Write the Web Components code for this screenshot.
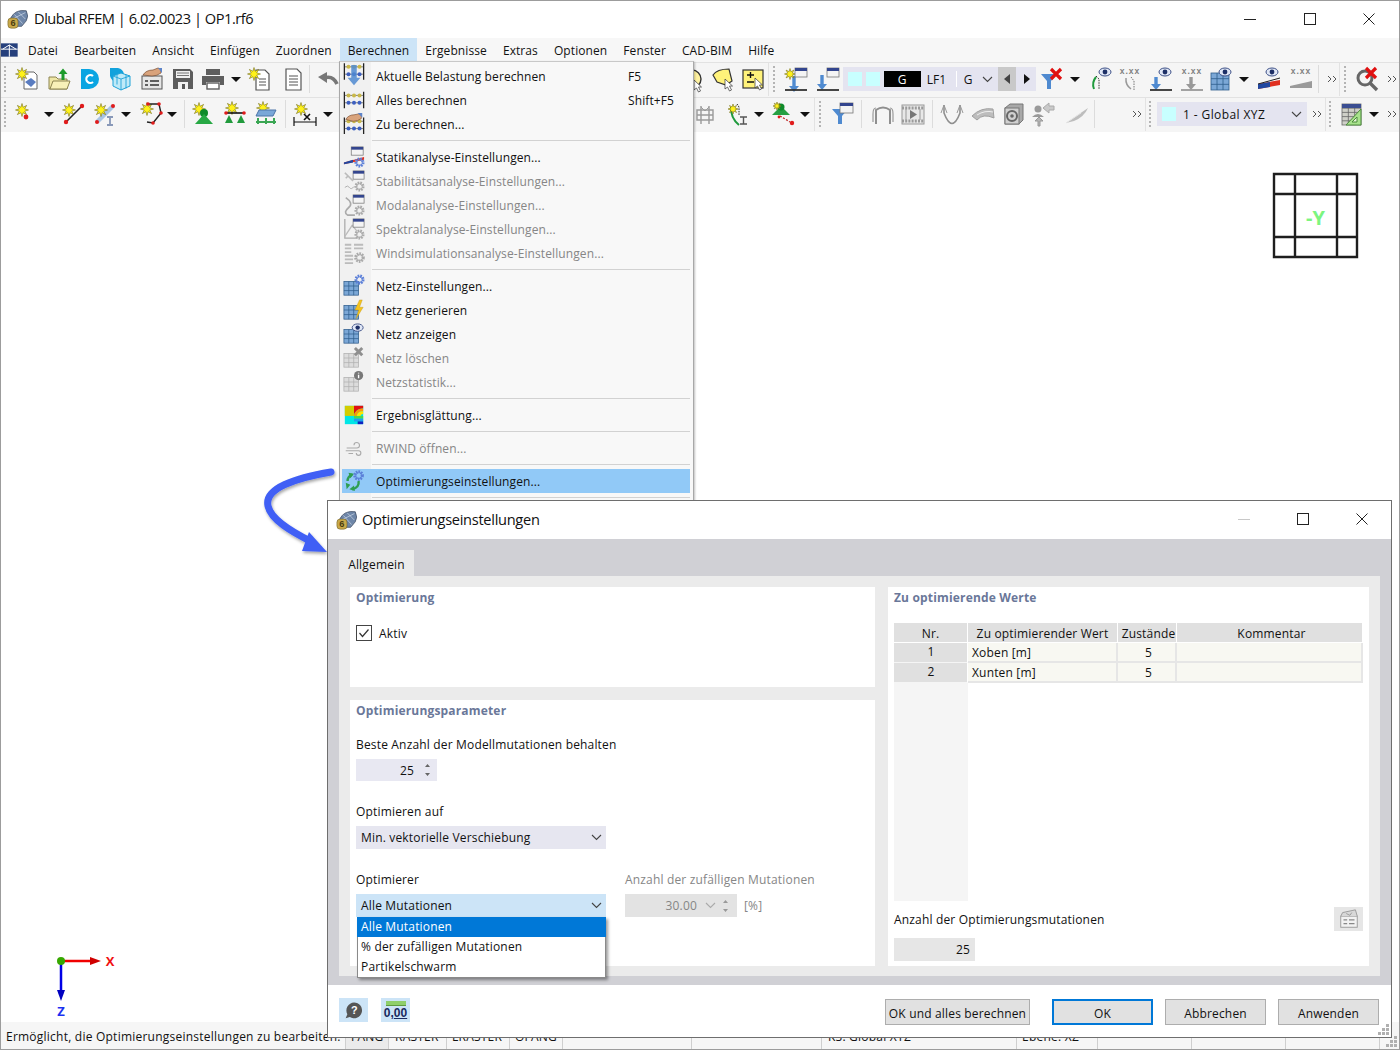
<!DOCTYPE html>
<html lang="de">
<head>
<meta charset="utf-8">
<title>Dlubal RFEM</title>
<style>
  html, body { margin: 0; padding: 0; background: #fff; }
  body { font: 12px "Open Sans", "Liberation Sans", sans-serif; color: #111; }
</style>
</head>
<body>
<rfem-app></rfem-app>
<script>
// ---- icon helpers, everything is drawn on a 24x24 box
const star = (x, y, r = 6.5) => {
  let p = [];
  for (let i = 0; i < 16; i++) {
    const a = Math.PI * i / 8, q = i % 2 ? r * .45 : r;
    p.push((x + q * Math.sin(a)).toFixed(1) + ',' + (y - q * Math.cos(a)).toFixed(1));
  }
  return `<polygon points="${p.join(' ')}" fill="#fff21a" stroke="#77701a" stroke-width=".6"/>`;
};
const dot = (x, y, r = 1.8, c = '#e01b1b') => `<circle cx="${x}" cy="${y}" r="${r}" fill="${c}"/>`;
const gear = (x, y, r = 3.5, c = '#5b7fd8') => `<circle cx="${x}" cy="${y}" r="${r}" fill="none" stroke="${c}" stroke-width="${r * .9}" stroke-dasharray="1.6 1"/><circle cx="${x}" cy="${y}" r="${r * .9}" fill="none" stroke="${c}" stroke-width=".9"/>`;
const grid = (x, y, w, h, n, m, f = '#7ba7d6', s = '#2f5d8c') => {
  let l = '';
  for (let i = 1; i < n; i++) l += `M${x + w * i / n} ${y}v${h}`;
  for (let i = 1; i < m; i++) l += `M${x} ${y + h * i / m}h${w}`;
  return `<rect x="${x}" y="${y}" width="${w}" height="${h}" fill="${f}" stroke="${s}" stroke-width=".8"/><path d="${l}" stroke="${s}" stroke-width=".8"/>`;
};
const eye = (x, y) => `<ellipse cx="${x}" cy="${y}" rx="6" ry="4" fill="#dfe6f5" stroke="#3c4f86"/><circle cx="${x}" cy="${y}" r="2.4" fill="#1d2f66"/>`;
const win = (x, y, w = 12, h = 9) => `<rect x="${x}" y="${y}" width="${w}" height="${h}" fill="#f4f4f4" stroke="#777" stroke-width=".8"/><rect x="${x}" y="${y}" width="${w}" height="3" fill="#33458e"/>`;
const arrowDown = (x, y, l, c = '#4f8ad0') => `<path d="M${x} ${y}v${l}" stroke="${c}" stroke-width="3.4"/><path d="M${x - 5} ${y + l}h10l-5 6z" fill="${c}"/>`;
const xMark = (x, y, r = 5, c = '#e01010') => `<path d="M${x - r} ${y - r}L${x + r} ${y + r}M${x + r} ${y - r}L${x - r} ${y + r}" stroke="${c}" stroke-width="3.2"/>`;
const xxx = (c = '#808080') => `<text x="12" y="7" text-anchor="middle" font-family="Liberation Sans, sans-serif" font-size="8.5" font-weight="700" letter-spacing="1" fill="${c}">x.xx</text>`;
const abacus = (y, h = 18) => {
  let s = `<path d="M1.5 ${y}v${h}M22.5 ${y}v${h}" stroke="#222" stroke-width="1.4"/>`;
  [y + 4, y + 12].forEach((q, i) => {
    s += `<path d="M2 ${q}h20" stroke="#555" stroke-width=".8"/>`;
    [6, 12, 18].forEach(x => s += dot(x, q, 2.2, i ? '#3c5fc0' : '#c9b84a'));
  });
  return s;
};
const filter = (c = '#4f8ad0') => `<path d="M1 7h16l-6 7v8h-4v-8z" fill="${c}"/>`;
const cursor = (x, y) => `<path d="M${x} ${y}l0 10 2.5-2 2 4 2-1-2-4h3z" fill="#fff" stroke="#333" stroke-width=".7"/>`;
const gr = '#9a9a9a';

const ICONS = {
  flag: `<rect x="0" y="4" width="20" height="16" fill="#26407c"/><path d="M0 11h20M10 6L2 11M10 6l8 5M10 6v14" stroke="#fff" stroke-width="1.2"/>`,
  app: `<path d="M4 11Q9 1 21 3q3 6 0 11l-5 6H7z" fill="#6e86a8" stroke="#3d4a60" stroke-width=".8"/><path d="M8 7l9 10M12 4l8 8M6 12l14-7" stroke="#c7d3e3" stroke-width=".8"/><rect x="1" y="11" width="11" height="11" rx="3.5" fill="#c9a94a" stroke="#6b5a20" stroke-width=".6"/><text x="6.500" y="20" text-anchor="middle" font-size="10" font-weight="700" font-family="Liberation Sans, sans-serif" fill="#4b3d10">6</text>`,
  new: `<path d="M9 5h10l3 3v14H9z" fill="#fff" stroke="#666"/><path d="M10 15l6-4 5 4-5 5z" fill="#5a7cc0"/>${star(7, 7)}`,
  open: `<path d="M2 10h7l2 2h9v10H2z" fill="#efe7a6" stroke="#8c8450"/><path d="M3 22l3-8h17l-3 8z" fill="#f8f1b8" stroke="#8c8450"/><path d="M16 13V7" stroke="#1d9a2b" stroke-width="3"/><path d="M11.5 7L16 1.5 20.500 7z" fill="#1d9a2b"/>`,
  dlubal: `<path d="M4 2h8a10 10 0 0 1 0 20H4z" fill="#0aa5e2"/><path d="M16 9a4 4 0 1 0 0 6" fill="none" stroke="#fff" stroke-width="2.2"/>`,
  cube: `<path d="M1 1h8a8 8 0 0 1 6 6H8v8A8 8 0 0 1 1 9z" fill="#12a2dc"/><path d="M12 6l9 3v10l-9 4-8-4V9z" fill="#bfeaf8" stroke="#1fa3d8"/><path d="M12 12l9-3M12 12v11M12 12L4 9M8 7.500v10M17 7.500v14" stroke="#1fa3d8" stroke-width=".9"/>`,
  hand: `<rect x="2" y="9" width="20" height="13" fill="#e6e6e6" stroke="#555"/><path d="M5 14h3M10 14h9M5 18h3M10 18h9" stroke="#333" stroke-width="1.4"/><path d="M3 8Q6 3 13 3l5-2 3 1v4q-4 3-9 3z" fill="#d9a37c" stroke="#7a4d30" stroke-width=".7"/><path d="M18 1l4 0v5z" fill="#5d84c9"/>`,
  save: `<path d="M2 2h17l3 3v17H2z" fill="#5d5d5d"/><rect x="5" y="4" width="14" height="7" fill="#f0f0f0"/><path d="M6 6h12M6 8.500h12" stroke="#777"/><rect x="7" y="15" width="10" height="7" fill="#f0f0f0"/><rect x="11" y="17" width="3" height="5" fill="#555"/>`,
  print: `<rect x="5" y="2" width="14" height="6" fill="#5f5f5f"/><path d="M1 9h22v9h-4v-3H5v3H1z" fill="#5f5f5f"/><rect x="6" y="16" width="12" height="6" fill="#fff" stroke="#5f5f5f" stroke-width="1.4"/>`,
  doc: `<path d="M5 2h11l4 4v17H5z" fill="#fff" stroke="#555" stroke-width="1.2"/><path d="M8 9h9M8 12h9M8 15h9M8 18h9" stroke="#555" stroke-width="1.2"/>`,
  stardoc: `<path d="M8 3h9l4 4v16H8z" fill="#fff" stroke="#555" stroke-width="1.2"/><path d="M11 12h7M11 15h7M11 18h7" stroke="#555" stroke-width="1.2"/>${star(6, 7, 6.5)}`,
  undo: `<path d="M21 17Q17 8 8 11" fill="none" stroke="#777" stroke-width="3.6"/><path d="M2 10l9-5v11z" fill="#777"/>`,
  stardot: `${star(11, 8)}${dot(15, 15, 2.4)}`,
  starline: `${star(8, 8)}<path d="M5 20L21 4" stroke="#222" stroke-width="1.6"/>${dot(5, 20, 2.2)}${dot(21, 4, 2.2)}`,
  starbeam: `<path d="M4 20L20 4" stroke="#a8c4e4" stroke-width="4.500"/>${star(8, 8)}${dot(4, 20, 2)}${dot(20, 4, 2)}<path d="M14 15h6M14 23h6M17 15v8" stroke="#8898b8" stroke-width="1.8"/>`,
  starpoly: `${star(7, 7)}<path d="M8 2h11l2 9-8 10-6-1" fill="none" stroke="#222" stroke-width="1.4"/>${dot(8, 2)}${dot(19, 2)}${dot(21, 11)}${dot(13, 21)}`,
  node: `${star(8, 7)}<circle cx="13" cy="11" r="4" fill="#0e8a2a"/><path d="M13 12l9 10H4z" fill="#27a844"/>`,
  supports: `${star(9, 6)}<path d="M2 11h20" stroke="#111" stroke-width="1.6"/>${dot(3, 11)}${dot(21, 11)}<path d="M6 13l-4 8h8zM18 13l-4 8h8z" fill="#219a3c"/>`,
  surface: `${star(9, 6)}<path d="M5 8h17l-3 6H2z" fill="#7aa7d8" stroke="#4c74a8"/><path d="M4 16v6M12 16v6M20 16v6M2 20h20" stroke="#3aa653" stroke-width="2"/>`,
  starx: `${star(8, 7)}<path d="M1 15v9M23 15v9M1 20h22" stroke="#111" stroke-width="1.2"/><path d="M11 12l6 6M17 12l-6 6" stroke="#111" stroke-width="1.6"/>`,
  yelcirc: `<circle cx="12" cy="12" r="9" fill="#fff2a0" stroke="#333" stroke-width="1.4"/>${cursor(14, 13)}`,
  yelshape: `<path d="M2 8Q6 2 18 2l3 12-6 4-9-3z" fill="#fff27a" stroke="#333" stroke-width="1.2"/>${cursor(14, 12)}`,
  yelbox: `<rect x="2" y="3" width="20" height="18" fill="#fff27a" stroke="#333" stroke-width="1.2"/><path d="M6 8h7M9.500 5v6M6 15h7" stroke="#111" stroke-width="1.4"/>${cursor(14, 11)}`,
  starload: `${arrowDown(10, 9, 10)}<path d="M1 23h22" stroke="#333" stroke-width="1.8"/>${star(6, 7, 5.5)}${win(11, 1)}`,
  load: `${arrowDown(6, 8, 9)}<path d="M1 23h22" stroke="#333" stroke-width="1.8"/>${win(11, 1)}`,
  filterx: `${filter()}${xMark(16, 7, 5)}`,
  filterwin: `${filter()}${win(9, 1, 13, 10)}`,
  eyebeam: `<path d="M6 22a12 12 0 0 1 2-12" fill="none" stroke="#1f9a3c" stroke-width="2"/><path d="M8 9l3 3v10" fill="none" stroke="#333" stroke-dasharray="1.5 1"/>${eye(17, 5)}`,
  xxxbeam: `${xxx()}<path d="M8 11a12 12 0 0 0 5 11" fill="none" stroke="#999" stroke-width="1.500"/><path d="M13 10l3 4v9" fill="none" stroke="#777" stroke-dasharray="1.5 1"/>`,
  eyeload: `${arrowDown(7, 10, 7)}<path d="M1 23h22" stroke="#333" stroke-width="1.8"/>${eye(16, 5)}`,
  xxxload: `${xxx()}${arrowDown(11, 10, 7, '#999')}<path d="M1 23h22" stroke="#999" stroke-width="1.8"/>`,
  grideye: `${grid(2, 6, 18, 17, 3, 3)}${eye(16, 5)}`,
  eyeslope: `<path d="M1 17L23 13v5L1 22z" fill="#e03020"/><path d="M1 17l12-2v5L1 22z" fill="#2148a0"/><path d="M1 17L23 11" stroke="#222"/>${eye(15, 5)}`,
  xxxslope: `${xxx()}<path d="M1 19l22-5v7H1z" fill="#9a9a9a"/>`,
  magx: `<circle cx="10" cy="11" r="7" fill="none" stroke="#666" stroke-width="3"/><path d="M15 16l7 7" stroke="#666" stroke-width="3.4"/>${xMark(16, 6, 5)}`,
  graymodel: `<path d="M4 8h16v10H4zM8 4v18M16 4v18M4 13h16" fill="none" stroke="${gr}" stroke-width="1.4"/><path d="M8 5l4 4 4-4" fill="none" stroke="${gr}"/>`,
  beamstar: `<path d="M6 5a22 22 0 0 0 8 18" fill="none" stroke="#1f9a3c" stroke-width="2"/><path d="M12 2l2 3v8" fill="none" stroke="#222" stroke-dasharray="1.5 1"/>${star(8, 7, 5)}<path d="M15 15h7M15 22h7M18.500 15v7" stroke="#555" stroke-width="1.4"/>`,
  nodered: `<path d="M11 4l9 9H2z" fill="#26a043"/><circle cx="11" cy="5" r="3.500" fill="#0e8a2a"/>${star(7, 4, 4)}<path d="M10 14l10 6" stroke="#c02020" stroke-dasharray="2 1.500" stroke-width="1.2"/>${dot(22, 21, 2.2)}${dot(9, 15, 1.4)}`,
  arch: `<path d="M5 22V8Q12 3 19 8v14" fill="none" stroke="#8f8f8f" stroke-width="2"/><path d="M2 12Q2 6 5 6M22 12q0-6-3-6M2 12v8M22 12v8" fill="none" stroke="${gr}" stroke-width="1.2"/>`,
  film: `<rect x="1" y="3" width="22" height="19" fill="#e8e8e8" stroke="${gr}"/><path d="M1 6h22M1 19h22" stroke="${gr}" stroke-dasharray="2 1.2" stroke-width="3"/><path d="M5 7v11M19 7v11" stroke="${gr}"/><path d="M9 8l7 4.500L9 17z" fill="#777"/>`,
  curve: `<path d="M4 3v8Q12 32 20 11V3" fill="none" stroke="#8f8f8f" stroke-width="1.6"/><path d="M1 11l3-8 3 8M17 11l3-8 3 8" fill="none" stroke="${gr}"/>`,
  sheet: `<path d="M1 14Q10 5 22 7l1 9Q12 11 6 18z" fill="#bdbdbd" stroke="#a0a0a0"/><path d="M6 13Q14 8 22 10" stroke="#eee" fill="none"/>`,
  box: `<path d="M3 6l5-4h13v16l-4 4H3z" fill="#a8a8a8" stroke="#777"/><rect x="3" y="6" width="14" height="16" fill="#d0d0d0" stroke="#777"/><circle cx="10" cy="14" r="5" fill="none" stroke="#666" stroke-width="2"/><circle cx="10" cy="14" r="1.800" fill="#666"/>`,
  person: `<circle cx="6" cy="7" r="3.500" fill="${gr}"/><path d="M0 15q6-6 12 0z" fill="${gr}"/><path d="M22 4h-5V1l-6 5 6 5V8h5z" fill="#c9c9c9" stroke="#aaa"/><path d="M6 24v-5H3l4-4 4 4H8v5z" fill="#b5b5b5" stroke="#999"/>`,
  slash: `<path d="M1 21L23 6q-4 9-14 13z" fill="#bdbdbd"/><path d="M1 21L16 11" stroke="#e6e6e6"/>`,
  table: `${grid(2, 2, 19, 21, 3, 5, '#cfd0c8', '#666')}<rect x="2" y="2" width="19" height="4" fill="#3b4e92"/><path d="M21 7v16H6z" fill="#a8e28c" stroke="#4b8a3a"/><path d="M12 20h5v-5z" fill="#e6f6d8" stroke="#4b8a3a"/>`,
  // menu icons
  calc1: `<g transform="translate(0 -2)">${abacus(0)}</g><path d="M9 0h6v14h4l-7 8-7-8h4z" fill="#4f8ad0" opacity=".85"/>`,
  calc2: abacus(3),
  calc3: `${abacus(5)}<path d="M3 7Q6 2 12 2l5-1 3 1v4q-4 3-9 3z" fill="#d9a37c" stroke="#7a4d30" stroke-width=".7"/><path d="M16 0h5v5z" fill="#5d84c9"/>`,
  statik: `<path d="M1 18L23 12v3L1 20z" fill="#e03020"/><path d="M1 18l10-3v3L1 20z" fill="#2148a0"/>${win(9, 1, 13, 9)}${gear(18, 18, 3.8)}`,
  stabil: `<path d="M2 3l9 9M6 6l-3 3" stroke="#bbb" stroke-width="1.800"/>${win(11, 1, 12, 9)}<path d="M2 19q3-3 5 0t5-1" fill="none" stroke="#aaa"/>${gear(18, 18, 3.8, '#aaa')}`,
  modal: `${win(11, 1, 12, 9)}<path d="M3 4q9 6 3 11T5 23h8" fill="none" stroke="#aaa" stroke-width="1.800"/>${gear(18, 18, 3.8, '#aaa')}`,
  spektral: `<path d="M2 1v21h14" fill="none" stroke="#aaa" stroke-width="1.4"/><path d="M2 20L10 8l5 6" fill="none" stroke="#bbb" stroke-width="1.4"/>${win(11, 1, 12, 9)}${gear(18, 18, 3.8, '#aaa')}`,
  winds: `<path d="M2 3h7M2 7h7M2 11h7M2 15h9M2 19h9M2 23h9M12 3h10M12 7h10" stroke="#bbb" stroke-width="2"/>${gear(18, 17, 4, '#aaa')}`,
  meshgear: `${grid(1, 7, 16, 15, 3, 3)}${gear(18, 5, 3.8)}`,
  meshbolt: `${grid(1, 7, 16, 15, 3, 3)}<path d="M18 1l-5 11h4l-3 10 8-13h-4l3-8z" fill="#f6c41e" stroke="#b8901a" stroke-width=".4"/>`,
  mesheye: `${grid(1, 7, 16, 15, 3, 3)}${eye(16, 5)}`,
  meshx: `${grid(1, 7, 16, 15, 3, 3, '#dcdcdc', '#b0b0b0')}${xMark(17, 5, 4, '#8f8f8f')}`,
  meshinfo: `${grid(1, 7, 16, 15, 3, 3, '#dcdcdc', '#b0b0b0')}<circle cx="17" cy="5" r="5" fill="#777"/><path d="M17 4v4M17 1.800v1" stroke="#fff" stroke-width="1.500"/>`,
  rainbow: `<rect x="2" y="2" width="20" height="20" fill="#00e6e6"/><rect x="2" y="2" width="10" height="11" fill="#d4cc00"/><path d="M12 2h10v3a9 9 0 0 0-10 8z" fill="#e01010"/><path d="M12 13a9 9 0 0 1 10-8v3a6 6 0 0 0-7 5z" fill="#ff9a00"/><path d="M15 13a6 6 0 0 1 7-5v3a3 3 0 0 0-3 2z" fill="#ffe600"/><path d="M12 13h10v3H12z" fill="#4dd84d"/><path d="M12 16h10v3H12z" fill="#20a0f0"/><path d="M16 19h6v3h-6z" fill="#1020c0"/>`,
  rwind: `<path d="M4 12h11a3 3 0 1 0-3-3M3 15h14a2.500 2.500 0 1 1-2.500 2.500M6 18h5" fill="none" stroke="#aaa" stroke-width="1.200"/>`,
  opt: `<path d="M5 12q0-5 5-7" fill="none" stroke="#2f9e50" stroke-width="2.600"/><path d="M6 3l6 1-4 5zM4 21l-1-7 5 2z" fill="#2f9e50"/><path d="M17 12q1 7-7 9" fill="none" stroke="#2f9e50" stroke-width="2.600"/><path d="M12 17l1 6-6-2z" fill="#2f9e50"/>${gear(17, 6, 4)}`,
  helpbub: `<path d="M12 3a9.500 9.500 0 1 1-5 17.500L2 22l2-5A9.500 9.500 0 0 1 12 3z" fill="#555"/><text x="12.500" y="17" text-anchor="middle" font-size="13" font-weight="700" font-family="Liberation Sans, sans-serif" fill="#fff">?</text>`,
  board: `<rect x="3" y="9" width="18" height="12" fill="#f2f2f2" stroke="#999"/><path d="M6 13h4M12 13h6M6 17h4M12 17h6" stroke="#888" stroke-width="1.400"/><path d="M3 9l2-4 14-3 2 7" fill="#d8d8d8" stroke="#999"/><path d="M9 6l4 2 2-3" fill="none" stroke="#999"/>`
};
const svg = (name, size = 24) => `<svg xmlns="http://www.w3.org/2000/svg" width="${size}" height="${size}" viewBox="0 0 24 24" style="display:block;overflow:visible">${ICONS[name] || ''}</svg>`;
const chevron = (c = '#444') => `<svg width="11" height="7" viewBox="0 0 11 7" style="display:block"><path d="M1 1l4.500 4.500L10 1" fill="none" stroke="${c}" stroke-width="1.100"/></svg>`;

class BaseEl extends HTMLElement {
  constructor() {
    super();
    this.shadowDOM = this.attachShadow({mode: "open"});
  }
  connectedCallback() {
    this.render();
  }
}

// ---- window chrome
class TitleBar extends BaseEl {
  render() {
    const small = this.hasAttribute('small');
    const w = small ? 59 : 59.5;
    this.shadowDOM.innerHTML = `
    <style>
      :host { display: flex; align-items: center; height: ${small ? 38 : 37}px; background: #fff; flex: none; }
      .ico { margin-left: ${small ? 8 : 6}px; width: 22px; padding-bottom: 1px; }
      .t { margin-left: ${small ? 4 : 5}px; font-size: 14.6px; color: #111; letter-spacing: ${small ? -.29 : -.46}px; white-space: nowrap; padding-bottom: 3px; }
      .ctl { margin-left: auto; display: flex; padding-bottom: 2px; }
      .b { width: ${w}px; height: 26px; display: flex; align-items: center; justify-content: center; }
    </style>
    <div class="ico">${svg('app', 22)}</div>
    <div class="t"><slot></slot></div>
    <div class="ctl">
      <div class="b"><svg width="12" height="12"><path d="M0 6.500h12" stroke="${small ? '#c8c8c8' : '#222'}"/></svg></div>
      <div class="b"><svg width="12" height="12"><rect x=".5" y=".5" width="11" height="11" fill="none" stroke="#222"/></svg></div>
      <div class="b"><svg width="12" height="12"><path d="M.5 .5l11 11M11.500 .5l-11 11" stroke="#222"/></svg></div>
    </div>`;
  }
}
customElements.define('title-bar', TitleBar);

class MenuBar extends BaseEl {
  render() {
    this.shadowDOM.innerHTML = `
    <style>
      :host { display: flex; height: 24px; background: #f7f7f7; flex: none; letter-spacing: .09px; }
      .flag { width: 19px; display: flex; align-items: center; }
      .m { padding: 0 8px; line-height: 25px; height: 23px; white-space: nowrap; color: #111; }
      .on { background: #cce4f7; }
    </style>
    <div class="flag">${svg('flag', 20)}</div>
    ${['Datei', 'Bearbeiten', 'Ansicht', 'Einfügen', 'Zuordnen', 'Berechnen', 'Ergebnisse', 'Extras', 'Optionen', 'Fenster', 'CAD-BIM', 'Hilfe']
      .map(m => `<div class="m ${m === 'Berechnen' ? 'on' : ''}">${m}</div>`).join('')}`;
  }
}
customElements.define('menu-bar', MenuBar);

// ---- toolbar pieces
class ToolRow extends BaseEl {
  render() {
    this.shadowDOM.innerHTML = `
    <style>
      :host { display: flex; align-items: center; height: 35px; box-sizing: border-box; padding-bottom: 2px; background: #f5f5f5; border-top: 1px solid #e2e2e2; flex: none; }
    </style>
    <slot></slot>`;
  }
}
customElements.define('tool-row', ToolRow);

class TbIcon extends BaseEl {
  render() {
    this.shadowDOM.innerHTML = `
    <style>:host { display: block; width: 24px; height: 24px; flex: none; }</style>
    ${svg(this.getAttribute('name'))}`;
  }
}
customElements.define('tb-icon', TbIcon);

class TbPart extends BaseEl {
  render() {
    const kind = this.getAttribute('kind');
    const css = {
      drop: `width: 10px; height: 5px;`,
      sep: `width: 1px; height: 28px; background: #dcdcdc;`,
      edge: `width: 1px; height: 34px; background: #e2e2e2;`,
      grip: `width: 2px; height: 26px; background: repeating-linear-gradient(#b4b4b4 0 2px, transparent 2px 4px);`,
      more: `width: 12px; height: 10px;`
    }[kind];
    const inner = kind === 'drop' ? `<svg width="10" height="5" style="display:block"><path d="M0 0h10L5 5z" fill="#111"/></svg>`
      : kind === 'more' ? `<svg width="12" height="10" style="display:block"><path d="M2 2l3 3-3 3M7 2l3 3-3 3" fill="none" stroke="#555"/></svg>` : '';
    this.shadowDOM.innerHTML = `<style>:host { display: block; flex: none; ${css} }</style>${inner}`;
  }
}
customElements.define('tb-part', TbPart);

class LoadPicker extends BaseEl {
  render() {
    this.shadowDOM.innerHTML = `
    <style>
      :host { display: flex; align-items: center; flex: none; width: 193px; height: 24px; background: #e4e4f0; }
      .sw { width: 14px; height: 14px; background: #c8ffff; margin-left: 4px; }
      .sw + .sw { margin-left: 4px; }
      .blk { width: 38px; height: 16px; line-height: 18px; margin-left: 4px; background: #000; color: #fff; text-align: center; }
      .lf { margin-left: 6px; width: 19px; }
      .v { width: 1px; height: 16px; background: #fff; margin-left: 10px; }
      .g { margin-left: 7px; width: 10px; }
      .c { margin-left: 8px; }
      .prev, .next { width: 19px; height: 24px; display: flex; align-items: center; justify-content: center; }
      .prev { margin-left: 5px; background: #c9c9c9; margin-right: 1px; }
    </style>
    <div class="sw" style="margin-left:5px"></div><div class="sw"></div>
    <div class="blk">G</div><div class="lf">LF1</div><div class="v"></div>
    <div class="g">G</div><div class="c">${chevron()}</div>
    <div class="prev"><svg width="6" height="10"><path d="M6 0v10L0 5z" fill="#444"/></svg></div>
    <div class="next"><svg width="6" height="10"><path d="M0 0v10l6-5z" fill="#111"/></svg></div>`;
  }
}
customElements.define('load-picker', LoadPicker);

class CsPicker extends BaseEl {
  render() {
    this.shadowDOM.innerHTML = `
    <style>
      :host { display: flex; align-items: center; flex: none; width: 150px; height: 24px; background: #e4e4f0; }
      .sw { width: 14px; height: 14px; background: #c8ffff; margin-left: 5px; }
      .t { margin-left: 7px; width: 104px; white-space: nowrap; letter-spacing: .4px; }
      .c { margin-left: 4px; }
    </style>
    <div class="sw"></div><div class="t">1 - Global XYZ</div><div class="c">${chevron()}</div>`;
  }
}
customElements.define('cs-picker', CsPicker);

// ---- calculation menu
class CalcMenu extends BaseEl {
  render() {
    this.shadowDOM.innerHTML = `
    <style>
      :host {
        position: absolute; left: 338px; top: 60px; width: 355px; box-sizing: border-box; height: 445px;
        padding-top: 2px; overflow: hidden; display: block; letter-spacing: .1px;
        background: linear-gradient(90deg, #f1f1f1 31px, #f8f8f8 31px);
        border: 1px solid #a8a8a8; border-top-color: #c8c8c8; box-shadow: 1px 1px 2px rgba(0,0,0,.25);
      }
    </style>
    <slot></slot>`;
  }
}
customElements.define('calc-menu', CalcMenu);

class MenuRow extends BaseEl {
  render() {
    const off = this.hasAttribute('off'), on = this.hasAttribute('on');
    this.shadowDOM.innerHTML = `
    <style>
      :host { display: flex; align-items: center; height: 24px; width: 348px; margin-left: 2px; color: ${off ? '#868686' : '#111'}; background: ${on ? '#91c9f7' : 'none'}; }
      .i { width: 22px; margin-left: 1px; }
      .l { margin-left: 11px; width: 252px; white-space: nowrap; }
    </style>
    <div class="i">${svg(this.getAttribute('icon'), 22)}</div>
    <div class="l"><slot></slot></div>
    <div class="k">${this.getAttribute('key') || ''}</div>`;
  }
}
customElements.define('menu-row', MenuRow);

class MenuSep extends BaseEl {
  render() {
    this.shadowDOM.innerHTML = `
    <style>
      :host { display: flex; align-items: center; height: 9px; margin-left: 32px; width: 318px; }
      div { height: 1px; width: 100%; background: #d2d2d2; }
    </style><div></div>`;
  }
}
customElements.define('menu-sep', MenuSep);

// ---- dialog pieces
class GroupBox extends BaseEl {
  render() {
    this.shadowDOM.innerHTML = `
    <style>
      :host { display: flex; flex-direction: column; background: #fff; padding: 0 6px; box-sizing: border-box; min-height: 0; }
      h3 { margin: 0; font-size: 12px; line-height: 22px; font-weight: 700; color: #6a7799; }
    </style>
    <h3>${this.getAttribute('label')}</h3>
    <slot></slot>`;
  }
}
customElements.define('group-box', GroupBox);

class FieldLabel extends BaseEl {
  render() {
    this.shadowDOM.innerHTML = `
    <style>:host { display: block; line-height: 18px; white-space: nowrap; color: ${this.hasAttribute('off') ? '#868686' : '#111'}; }</style>
    <slot></slot>`;
  }
}
customElements.define('field-label', FieldLabel);

class CheckField extends BaseEl {
  render() {
    this.shadowDOM.innerHTML = `
    <style>
      :host { display: flex; align-items: center; gap: 7px; height: 20px; }
      .b { width: 16px; height: 16px; box-sizing: border-box; border: 1px solid #444; background: #fff; }
    </style>
    <div class="b"><svg width="14" height="14"><path d="M2.500 7l3 3.500 6-7" fill="none" stroke="#333" stroke-width="1.200"/></svg></div>
    <slot></slot>`;
  }
}
customElements.define('check-field', CheckField);

const spinArrows = c => `<svg width="7" height="16" style="display:block"><path d="M3.500 2l2.500 3H1zM3.500 14l2.500-3H1z" fill="${c}"/></svg>`;

class SpinField extends BaseEl {
  render() {
    this.shadowDOM.innerHTML = `
    <style>
      :host { display: flex; align-items: center; justify-content: flex-end; width: 81px; height: 22px; background: #e8e8f2; box-sizing: border-box; padding-right: 6px; gap: 10px; }
    </style>
    <slot></slot>${spinArrows('#666')}`;
  }
}
customElements.define('spin-field', SpinField);

class ComboField extends BaseEl {
  render() {
    const hot = this.hasAttribute('hot');
    this.shadowDOM.innerHTML = `
    <style>
      :host { display: flex; align-items: center; width: 250px; height: 23px; background: ${hot ? '#cce4f7' : '#e6e6f0'}; box-sizing: border-box; padding: 0 4px 0 5px; position: relative; }
      .t { flex: 1; white-space: nowrap; }
    </style>
    <div class="t"><slot></slot></div>${chevron()}
    <slot name="list"></slot>`;
  }
}
customElements.define('combo-field', ComboField);

class DropList extends BaseEl {
  render() {
    this.shadowDOM.innerHTML = `
    <style>
      :host { position: absolute; left: 1px; top: 23px; width: 249px; box-sizing: border-box; background: #fff; border: 1px solid #8a8a8a; border-top: 0; box-shadow: 2px 2px 3px rgba(0,0,0,.4); display: block; z-index: 2; }
      div { height: 20px; line-height: 20px; padding-left: 3px; white-space: nowrap; }
      .on { background: #0078d7; color: #fff; margin-left: -1px; margin-right: -1px; padding-left: 4px; }
    </style>
    <div class="on">Alle Mutationen</div>
    <div>% der zufälligen Mutationen</div>
    <div>Partikelschwarm</div>`;
  }
}
customElements.define('drop-list', DropList);

class RatioField extends BaseEl {
  render() {
    this.shadowDOM.innerHTML = `
    <style>
      :host { display: flex; align-items: center; gap: 7px; color: #868686; }
      .f { display: flex; align-items: center; width: 112px; height: 23px; background: #e3e3e3; box-sizing: border-box; }
      .v { width: 72px; text-align: right; }
      .c { margin-left: 8px; }
      .s { margin-left: 6px; }
    </style>
    <div class="f"><div class="v">30.00</div><div class="c">${chevron('#aaa')}</div><div class="s">${spinArrows('#999')}</div></div>
    <div>[%]</div>`;
  }
}
customElements.define('ratio-field', RatioField);

class DataTable extends BaseEl {
  render() {
    const row = (n, w) => `<div class="n">${n}</div><div class="d l">${w}</div><div class="d c">5</div><div class="d"></div>`;
    this.shadowDOM.innerHTML = `
    <style>
      :host { display: flex; flex-direction: column; flex: none; height: 278px; margin-top: 14px; }
      .g { display: grid; grid-template-columns: 74px 150px 59px 186px; grid-auto-rows: 20px; line-height: 20px; flex: none; }
      .h { background: #e0e0e0; text-align: center; border-right: 1px solid #fff; border-bottom: 1px solid #fff; white-space: nowrap; box-sizing: border-box; line-height: 21px; }
      .h.k { padding-left: 4px; }
      .h.z { padding-left: 3px; }
      .n { background: #e0e0e0; text-align: center; border-right: 1px solid #fff; border-bottom: 1px solid #f5f5f5; box-sizing: border-box; line-height: 18px; padding-left: 1px; }
      .d { background: #f8f8f2; border-right: 2px solid #e6e6e6; border-bottom: 2px solid #e6e6e6; box-sizing: border-box; white-space: nowrap; line-height: 20px; }
      .l { padding-left: 4px; }
      .c { text-align: center; padding-left: 4px; }
      .rest { width: 74px; flex: 1; background: #f5f5f5; }
    </style>
    <div class="g">
      <div class="h">Nr.</div><div class="h">Zu optimierender Wert</div><div class="h z">Zustände</div><div class="h k">Kommentar</div>
      ${row(1, 'Xoben [m]')}${row(2, 'Xunten [m]')}
    </div>
    <div class="rest"></div>`;
  }
}
customElements.define('data-table', DataTable);

class PushBtn extends BaseEl {
  render() {
    const main = this.hasAttribute('main');
    this.shadowDOM.innerHTML = `
    <style>
      :host { display: block; width: ${this.getAttribute('w') || 101}px; height: 26px; box-sizing: border-box; background: #e1e1e1; border: ${main ? '2px solid #0078d7' : '1px solid #adadad'}; text-align: center; line-height: ${main ? 26 : 28}px; white-space: nowrap; flex: none; color: #111; }
    </style>
    <slot></slot>`;
  }
}
customElements.define('push-btn', PushBtn);

class IconBtn extends BaseEl {
  render() {
    const name = this.getAttribute('icon');
    this.shadowDOM.innerHTML = `
    <style>
      :host { display: flex; align-items: center; justify-content: center; width: 29px; height: 24px; background: ${this.getAttribute('bg') || '#cce4f7'}; flex: none; }
      .num { display: flex; flex-direction: column; align-items: center; font: 700 12px "Liberation Sans", sans-serif; letter-spacing: 0; color: #1a2a60; line-height: 12px; }
      .bar { width: 20px; height: 5px; background: #8fcf6b; margin-bottom: 1px; border-bottom: 1px solid #5e9a40; box-sizing: border-box; }
      u { text-underline-offset: 1px; }
    </style>
    ${name ? svg(name, name === 'board' ? 22 : 20) : `<div class="num"><div class="bar"></div><div>0,<u>00</u></div></div>`}`;
  }
}
customElements.define('icon-btn', IconBtn);

const gripDots = `<svg width="13" height="13" style="display:block"><path d="M9 1h3v3H9zM5 5h3v3H5zM9 5h3v3H9zM1 9h3v3H1zM5 9h3v3H5zM9 9h3v3H9z" fill="#b0b0b0"/></svg>`;

class OptDialog extends BaseEl {
  render() {
    this.shadowDOM.innerHTML = `
    <style>
      :host { position: absolute; left: 326px; top: 499px; width: 1065px; height: 538px; box-sizing: border-box; border: 1px solid #6e6e6e; background: #fff; display: flex; flex-direction: column; letter-spacing: .17px; }
      .body { flex: 1; background: #d0d0d5; padding: 11px 11px 9px; display: flex; flex-direction: column; min-height: 0; }
      .tab { width: 75px; height: 26px; line-height: 30px; background: #ebebeb; text-align: center; flex: none; }
      .panel { flex: 1; background: #ebebeb; padding: 11px 11px 10px; display: grid; grid-template-columns: 525px 481px; gap: 13px; min-height: 0; }
      .left { display: flex; flex-direction: column; gap: 13px; min-height: 0; }
      .g1 { height: 100px; flex: none; }
      .g2 { flex: 1; }
      .two { display: grid; grid-template-columns: 250px 1fr; column-gap: 19px; margin-top: 22px; }
      .two field-label { margin-bottom: 5px; }
      .mt14 { margin-top: 14px; }
      .mt22 { margin-top: 22px; }
      .mt5 { margin-top: 5px; }
      .count { display: flex; align-items: center; justify-content: space-between; margin-top: 6px; height: 24px; }
      .count field-label { padding-top: 2px; }
      .res { width: 81px; height: 23px; margin-top: 7px; background: #e6e6e6; text-align: right; line-height: 24px; padding-right: 5px; box-sizing: border-box; }
      .foot { height: 52px; flex: none; display: flex; padding: 13px 12px 0 11px; box-sizing: border-box; gap: 13px; position: relative; }
      .sp { flex: 1; }
      .btns { display: flex; gap: 12px; margin-top: 1px; }
      .btns .ok { margin-left: 10px; }
      .grip { position: absolute; right: 1px; bottom: 1px; }
    </style>
    <title-bar small>Optimierungseinstellungen</title-bar>
    <div class="body">
      <div class="tab">Allgemein</div>
      <div class="panel">
        <div class="left">
          <group-box class="g1" label="Optimierung">
            <check-field style="margin-top:14px">Aktiv</check-field>
          </group-box>
          <group-box class="g2" label="Optimierungsparameter">
            <field-label class="mt14">Beste Anzahl der Modellmutationen behalten</field-label>
            <spin-field class="mt5">25</spin-field>
            <field-label class="mt22">Optimieren auf</field-label>
            <combo-field class="mt5">Min. vektorielle Verschiebung</combo-field>
            <div class="two">
              <field-label>Optimierer</field-label>
              <field-label off>Anzahl der zufälligen Mutationen</field-label>
              <combo-field hot>Alle Mutationen<drop-list slot="list"></drop-list></combo-field>
              <ratio-field></ratio-field>
            </div>
          </group-box>
        </div>
        <group-box label="Zu optimierende Werte">
          <data-table></data-table>
          <div class="count"><field-label>Anzahl der Optimierungsmutationen</field-label><icon-btn icon="board" bg="#e6e6e6"></icon-btn></div>
          <div class="res">25</div>
        </group-box>
      </div>
    </div>
    <div class="foot">
      <icon-btn icon="helpbub"></icon-btn>
      <icon-btn></icon-btn>
      <div class="sp"></div>
      <div class="btns">
        <push-btn w="145">OK und alles berechnen</push-btn>
        <push-btn class="ok" main>OK</push-btn>
        <push-btn>Abbrechen</push-btn>
        <push-btn>Anwenden</push-btn>
      </div>
      <div class="grip">${gripDots}</div>
    </div>`;
  }
}
customElements.define('opt-dialog', OptDialog);

class StatusBar extends BaseEl {
  render() {
    const cells = [
      ['Ermöglicht, die Optimierungseinstellungen zu bearbeiten.', 345, 5, ''],
      ['FANG', 43, 5, '#ebebeb'], ['RASTER', 58, 6, ''], ['LRASTER', 63, 5, ''], ['OFANG', 53, 5, ''],
      ['', 129, 0, ''], ['', 130, 0, ''], ['KS: Global XYZ', 195, 6, ''], ['Ebene: XZ', 81, 5, ''],
      ['', 94, 0, ''], ['', 94, 0, ''], ['', 94, 0, '']
    ];
    this.shadowDOM.innerHTML = `
    <style>
      :host { display: flex; height: 27px; background: #f6f6f6; flex: none; position: relative; letter-spacing: .23px; }
      div { box-sizing: border-box; line-height: 30px; height: 27px; white-space: nowrap; border-right: 1px solid #cfcfcf; flex: none; }
      .grip { position: absolute; right: 1px; bottom: 1px; border: 0; line-height: 0; height: auto; }
    </style>
    ${cells.map(c => `<div style="width:${c[1]}px;padding-left:${c[2]}px;${c[3] ? 'background:' + c[3] : ''}">${c[0]}</div>`).join('')}
    <div class="grip">${gripDots}</div>`;
  }
}
customElements.define('status-bar', StatusBar);

class ViewPane extends BaseEl {
  render() {
    this.shadowDOM.innerHTML = `
    <style>
      :host { display: block; flex: 1; background: #fff; position: relative; min-height: 0; }
      svg { position: absolute; }
    </style>
    <svg style="left:1271px;top:40px" width="88" height="88" viewBox="0 0 88 88">
      <path d="M2 2h83v83H2zM23 2v83M65 2v83M2 22h83M2 65h83" fill="none" stroke="#1e1e1e" stroke-width="2.400"/>
      <text x="43.500" y="53" text-anchor="middle" font-family="Open Sans, sans-serif" font-weight="700" font-size="20" fill="#7cf580">-Y</text>
    </svg>
    <svg style="left:49px;top:819px" width="80" height="72" viewBox="0 0 80 72">
      <path d="M11 10h30" stroke="#f00000" stroke-width="2.500"/><path d="M40 6l11 4-11 4z" fill="#d00000"/>
      <path d="M11 10v30" stroke="#0000e6" stroke-width="2.500"/><path d="M7 39l4 11 4-11z" fill="#0000c0"/>
      <circle cx="11" cy="10" r="4" fill="#37a800"/>
      <text x="60" y="15" text-anchor="middle" font-family="Open Sans, sans-serif" font-weight="700" font-size="13" fill="#f01010">X</text>
      <text x="11" y="65" text-anchor="middle" font-family="Open Sans, sans-serif" font-weight="700" font-size="13" fill="#1a30f0">Z</text>
    </svg>`;
  }
}
customElements.define('view-pane', ViewPane);

// a row is a list of [kind, center x, icon]; margins come from the centers
const WIDTH = {icon: 24, drop: 10, sep: 1, edge: 1, grip: 2, more: 12};
function buildRow(items) {
  let right = 1;
  return items.map(([kind, at, name]) => {
    const w = WIDTH[kind];
    const left = kind === 'load' || kind === 'cs' ? at : at - w / 2;
    const gap = `margin-left:${Math.round((left - right) * 2) / 2}px`;
    if (kind === 'load') { right = left + 193; return `<load-picker style="${gap}"></load-picker>`; }
    if (kind === 'cs') { right = left + 150; return `<cs-picker style="${gap}"></cs-picker>`; }
    right = left + w;
    return kind === 'icon'
      ? `<tb-icon name="${name}" style="${gap}"></tb-icon>`
      : `<tb-part kind="${kind}" style="${gap}"></tb-part>`;
  }).join('');
}

const ROW_ONE = [
  ['grip', 5], ['icon', 27, 'new'], ['icon', 59, 'open'], ['icon', 89, 'dlubal'], ['icon', 121, 'cube'],
  ['icon', 152, 'hand'], ['icon', 183, 'save'], ['icon', 213, 'print'], ['drop', 236], ['icon', 260, 'stardoc'],
  ['icon', 293, 'doc'], ['sep', 309], ['icon', 328, 'undo'],
  ['icon', 692, 'yelcirc'], ['icon', 723, 'yelshape'], ['icon', 753, 'yelbox'], ['edge', 768], ['grip', 774],
  ['icon', 796, 'starload'], ['icon', 828, 'load'], ['load', 843],
  ['icon', 1052, 'filterx'], ['drop', 1075], ['icon', 1100, 'eyebeam'], ['icon', 1130, 'xxxbeam'],
  ['icon', 1161, 'eyeload'], ['icon', 1192, 'xxxload'], ['icon', 1221, 'grideye'], ['drop', 1244],
  ['icon', 1269, 'eyeslope'], ['icon', 1301, 'xxxslope'], ['sep', 1318], ['more', 1332], ['edge', 1339], ['grip', 1345],
  ['icon', 1367, 'magx'], ['more', 1392]
];
const ROW_TWO = [
  ['grip', 5], ['icon', 23, 'stardot'], ['drop', 49], ['icon', 73, 'starline'], ['icon', 105, 'starbeam'], ['drop', 126],
  ['icon', 152, 'starpoly'], ['drop', 172], ['sep', 184], ['icon', 203, 'node'], ['icon', 235, 'supports'], ['icon', 266, 'surface'],
  ['sep', 285], ['icon', 305, 'starx'], ['drop', 328],
  ['icon', 705, 'graymodel'], ['icon', 737, 'beamstar'], ['drop', 759], ['icon', 782, 'nodered'], ['drop', 805], ['edge', 814], ['grip', 820],
  ['icon', 843, 'filterwin'], ['sep', 861], ['icon', 883, 'arch'], ['icon', 913, 'film'], ['sep', 932],
  ['icon', 952, 'curve'], ['icon', 983, 'sheet'], ['icon', 1014, 'box'], ['icon', 1044, 'person'], ['icon', 1077, 'slash'], ['sep', 1094],
  ['more', 1137], ['edge', 1145], ['grip', 1150], ['cs', 1157], ['more', 1317], ['edge', 1325], ['grip', 1330],
  ['icon', 1352, 'table'], ['drop', 1374], ['more', 1392]
];

const MENU = `
  <menu-row icon="calc1" key="F5">Aktuelle Belastung berechnen</menu-row>
  <menu-row icon="calc2" key="Shift+F5">Alles berechnen</menu-row>
  <menu-row icon="calc3">Zu berechnen...</menu-row>
  <menu-sep></menu-sep>
  <menu-row icon="statik">Statikanalyse-Einstellungen...</menu-row>
  <menu-row icon="stabil" off>Stabilitätsanalyse-Einstellungen...</menu-row>
  <menu-row icon="modal" off>Modalanalyse-Einstellungen...</menu-row>
  <menu-row icon="spektral" off>Spektralanalyse-Einstellungen...</menu-row>
  <menu-row icon="winds" off>Windsimulationsanalyse-Einstellungen...</menu-row>
  <menu-sep></menu-sep>
  <menu-row icon="meshgear">Netz-Einstellungen...</menu-row>
  <menu-row icon="meshbolt">Netz generieren</menu-row>
  <menu-row icon="mesheye">Netz anzeigen</menu-row>
  <menu-row icon="meshx" off>Netz löschen</menu-row>
  <menu-row icon="meshinfo" off>Netzstatistik...</menu-row>
  <menu-sep></menu-sep>
  <menu-row icon="rainbow">Ergebnisglättung...</menu-row>
  <menu-sep></menu-sep>
  <menu-row icon="rwind" off>RWIND öffnen...</menu-row>
  <menu-sep></menu-sep>
  <menu-row icon="opt" on>Optimierungseinstellungen...</menu-row>
  <menu-sep></menu-sep>`;

class RfemApp extends BaseEl {
  render() {
    this.shadowDOM.innerHTML = `
    <style>
      :host { display: flex; flex-direction: column; position: relative; width: 1400px; height: 1050px; box-sizing: border-box; border: 1px solid #9c9c9c; overflow: hidden; background: #fff; }
      .arrow { position: absolute; left: -1px; top: -1px; pointer-events: none; }
    </style>
    <title-bar>Dlubal RFEM | 6.02.0023 | OP1.rf6</title-bar>
    <menu-bar></menu-bar>
    <tool-row>${buildRow(ROW_ONE)}</tool-row>
    <tool-row>${buildRow(ROW_TWO)}</tool-row>
    <view-pane></view-pane>
    <status-bar></status-bar>
    <calc-menu>${MENU}</calc-menu>
    <svg class="arrow" width="1400" height="1050" viewBox="0 0 1400 1050">
      <defs><filter id="sh" x="-20%" y="-20%" width="140%" height="140%"><feDropShadow dx="1" dy="2" stdDeviation="1.500" flood-color="#000" flood-opacity=".35"/></filter></defs>
      <g filter="url(#sh)">
        <path d="M331 472C296 478 264 488 268 506C271 520 292 532 312 542" fill="none" stroke="#3f5ff5" stroke-width="7" stroke-linecap="round"/>
        <path d="M309 532L327 552L302 551Z" fill="#3f5ff5"/>
      </g>
    </svg>
    <opt-dialog></opt-dialog>`;
  }
}
customElements.define('rfem-app', RfemApp);
</script>
</body>
</html>
